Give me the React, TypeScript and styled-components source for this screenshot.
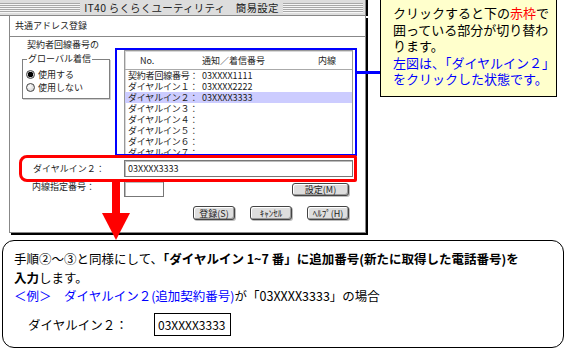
import styled, { createGlobalStyle } from 'styled-components'

const GlobalStyle = createGlobalStyle`
  body {
    margin: 0;
    background: #ffffff;
  }
`

const listRows = [
  { label: '契約者回線番号：', number: '03XXXX1111' },
  { label: 'ダイヤルイン１：', number: '03XXXX2222' },
  { label: 'ダイヤルイン２：', number: '03XXXX3333', selected: true },
  { label: 'ダイヤルイン３：', number: '' },
  { label: 'ダイヤルイン４：', number: '' },
  { label: 'ダイヤルイン５：', number: '' },
  { label: 'ダイヤルイン６：', number: '' },
  { label: 'ダイヤルイン７：', number: '' },
]

function App() {
  return (
    <Root>
      <GlobalStyle />
      <TopRow>
        <Window>
          <TitleBar>
            <Stripes />
            <TitleText>IT40 らくらくユーティリティ　簡易設定</TitleText>
            <Stripes />
          </TitleBar>
          <Body>
            <Header>共通アドレス登録</Header>
            <Main>
              <LeftGroup>
                <Caption>契約者回線番号の</Caption>
                <GroupBox>
                  <Legend>グローバル着信</Legend>
                  <RadioRow $first>
                    <Radio $checked />
                    使用する
                  </RadioRow>
                  <RadioRow>
                    <Radio />
                    使用しない
                  </RadioRow>
                </GroupBox>
              </LeftGroup>
              <List>
                <ListHead>
                  <HeadCell $pad={15}>No.</HeadCell>
                  <HeadCell>通知／着信番号</HeadCell>
                  <HeadCell>内線</HeadCell>
                </ListHead>
                {listRows.map((row) => (
                  <ListRow key={row.label} $selected={row.selected}>
                    <RowLabel>{row.label}</RowLabel>
                    <span>{row.number}</span>
                    <span />
                  </ListRow>
                ))}
              </List>
            </Main>
            <DialRow>
              <FieldLabel $width={91}>ダイヤルイン２：</FieldLabel>
              <DialInput>03XXXX3333</DialInput>
            </DialRow>
            <ExtRow>
              <FieldLabel $width={92}>内線指定番号：</FieldLabel>
              <ExtBox />
              <SetButton>設定(M)</SetButton>
            </ExtRow>
            <ButtonRow>
              <MacButton>登録(S)</MacButton>
              <MacButton>ｷｬﾝｾﾙ</MacButton>
              <MacButton>ﾍﾙﾌﾟ(H)</MacButton>
            </ButtonRow>
          </Body>
        </Window>
        <Callout>
          クリックすると下の<Red>赤枠</Red>で<br />
          囲っている部分が切り替わ<br />
          ります。<br />
          <Blue>
            左図は、「ダイヤルイン２」<br />
            をクリックした状態です。
          </Blue>
        </Callout>
      </TopRow>

      <BottomBox>
        <TextLine>
          手順②～③と同様にして、<b>「ダイヤルイン 1~7 番」に追加番号(新たに取得した電話番号)を</b>
        </TextLine>
        <TextLine>
          <b>入力</b>します。
        </TextLine>
        <TextLine>
          <Blue>＜例＞　ダイヤルイン２(追加契約番号)</Blue>が「03XXXX3333」の場合
        </TextLine>
        <ExampleRow>
          <ExampleLabel>ダイヤルイン２：</ExampleLabel>
          <ExampleBox>03XXXX3333</ExampleBox>
        </ExampleRow>
      </BottomBox>

      <BlueFrame />
      <BlueLink />
      <RedFrame />
      <Arrow width="32" height="61" viewBox="0 0 32 61">
        <rect x="12" y="0" width="8" height="34" fill="#ff0000" />
        <polygon points="2,33 30,33 16,60" fill="#ff0000" />
      </Arrow>
    </Root>
  )
}

export default App

const Root = styled.div`
  position: relative;
  width: 565px;
  height: 349px;
  overflow: hidden;
  background: #ffffff;
  font-family: "Noto Sans CJK JP", "DejaVu Sans", sans-serif;
  color: #000000;
`

const TopRow = styled.div`
  display: flex;
  align-items: flex-start;
  height: 240px;
`

const Window = styled.div`
  width: 366px;
  display: flex;
  flex-direction: column;
  flex-shrink: 0;
`

const TitleBar = styled.div`
  height: 16px;
  box-sizing: border-box;
  display: flex;
  align-items: center;
  padding-right: 2px;
  background: #dddddd;
  border-bottom: 1px solid #888888;
  border-right: 1px solid #888888;
  box-shadow: 2px 0 0 #000000;
`

const Stripes = styled.div`
  flex: 1;
  height: 10px;
  background: repeating-linear-gradient(to bottom, #a8a8a8 0 1px, #f6f6f6 1px 2px);
`

const TitleText = styled.div`
  padding: 0 4px;
  font-size: 10.5px;
  letter-spacing: 0.2px;
  line-height: 15px;
  color: #222222;
  white-space: nowrap;
`

const Body = styled.div`
  margin-left: 9px;
  height: 217px;
  box-sizing: border-box;
  border-left: 1px solid #888888;
  border-right: 1px solid #888888;
  border-bottom: 1px solid #888888;
  box-shadow: 2px 2px 0 #000000;
  background: #ffffff;
  font-size: 9px;
  color: #222222;
`

const Header = styled.div`
  height: 21px;
  box-sizing: border-box;
  padding-left: 5px;
  line-height: 20px;
  border-bottom: 1px solid #888888;
`

const Main = styled.div`
  display: flex;
  height: 119px;
  padding-left: 12px;
`

const LeftGroup = styled.div`
  width: 88px;
  display: flex;
  flex-direction: column;
`

const Caption = styled.div`
  margin: 2px 0 0 5px;
  line-height: 12px;
  white-space: nowrap;
`

const GroupBox = styled.div`
  margin-top: 8px;
  height: 40px;
  box-sizing: border-box;
  display: flex;
  flex-direction: column;
  border: 1px solid #808080;
  box-shadow: 1px 1px 0 #d0d0d0;
`

const Legend = styled.span`
  align-self: flex-start;
  margin: -7px 0 0 4px;
  padding: 0 1px;
  line-height: 12px;
  background: #ffffff;
  white-space: nowrap;
`

const RadioRow = styled.div<{ $first?: boolean }>`
  display: flex;
  align-items: center;
  gap: 3px;
  height: 13px;
  margin-top: ${(p) => (p.$first ? '3px' : '0')};
  padding-left: 3px;
  white-space: nowrap;
`

const Radio = styled.span<{ $checked?: boolean }>`
  width: 9px;
  height: 9px;
  box-sizing: border-box;
  border-radius: 50%;
  border: 1px solid #444444;
  background: ${(p) =>
    p.$checked
      ? 'radial-gradient(circle, #000000 0 2.5px, #cfcfcf 3px)'
      : 'radial-gradient(circle at 35% 35%, #ffffff, #c8c8c8)'};
`

const List = styled.div`
  margin: 13px 0 0 14px;
  width: 229px;
  height: 106px;
  box-sizing: border-box;
  border: 1px solid #999999;
  box-shadow: inset 1px 1px 0 #d8d8d8;
`

const ListHead = styled.div`
  display: grid;
  grid-template-columns: 77px 116px 1fr;
  align-items: center;
  height: 19px;
  box-sizing: border-box;
  border-bottom: 1px solid #aaaaaa;
`

const HeadCell = styled.span<{ $pad?: number }>`
  padding-left: ${(p) => p.$pad ?? 0}px;
  white-space: nowrap;
`

const ListRow = styled.div<{ $selected?: boolean }>`
  display: grid;
  grid-template-columns: 77px 116px 1fr;
  align-items: center;
  height: 11px;
  line-height: 11px;
  background: ${(p) => (p.$selected ? '#ccccff' : 'transparent')};
  white-space: nowrap;
`

const RowLabel = styled.span`
  padding-left: 3px;
  letter-spacing: -0.2px;
`

const DialRow = styled.div`
  display: flex;
  align-items: center;
  height: 25px;
  padding-left: 23px;
`

const FieldLabel = styled.span<{ $width: number }>`
  width: ${(p) => p.$width}px;
  line-height: 12px;
  white-space: nowrap;
`

const DialInput = styled.div`
  width: 229px;
  height: 17px;
  box-sizing: border-box;
  padding-left: 3px;
  line-height: 15px;
  border: 1px solid #777777;
  box-shadow: inset 1px 1px 0 #bbbbbb;
`

const ExtRow = styled.div`
  display: flex;
  align-items: flex-start;
  height: 17px;
  padding-left: 22px;
`

const ExtBox = styled.div`
  width: 40px;
  height: 16px;
  box-sizing: border-box;
  border: 1px solid #777777;
  box-shadow: inset 1px 1px 0 #bbbbbb;
`

const MacButton = styled.div`
  width: 42px;
  height: 14px;
  box-sizing: border-box;
  display: flex;
  align-items: center;
  justify-content: center;
  border: 1px solid #444444;
  border-radius: 3px;
  background: #dedede;
  box-shadow: inset 1px 1px 0 #ffffff, inset -1px -1px 0 #9a9a9a, 1px 1px 0 #bdbdbd;
  white-space: nowrap;
  font-size: 9px;
`

const SetButton = styled(MacButton)`
  width: 57px;
  height: 13px;
  margin: 2px 16px 0 auto;
`

const ButtonRow = styled.div`
  display: flex;
  justify-content: flex-end;
  gap: 15px;
  margin-top: 8px;
  padding-right: 16px;
`

const Callout = styled.div`
  margin: -1px 0 0 14px;
  width: 177px;
  height: 98px;
  box-sizing: border-box;
  padding: 5px 0 0 12px;
  border: 1px solid #000000;
  background: #ffffcc;
  font-size: 13px;
  line-height: 16.5px;
  white-space: nowrap;
`

const Red = styled.span`
  color: #ff0000;
`

const Blue = styled.span`
  color: #0000ff;
`

const BottomBox = styled.div`
  margin-left: 2px;
  width: 562px;
  height: 108px;
  box-sizing: border-box;
  padding: 9px 0 0 11px;
  border: 1px solid #000000;
  border-radius: 12px;
  font-size: 12.5px;
`

const TextLine = styled.div`
  line-height: 18.5px;
  white-space: nowrap;
`

const ExampleRow = styled.div`
  display: flex;
  align-items: center;
  margin-top: 7px;
  padding-left: 14px;
`

const ExampleLabel = styled.span`
  width: 126px;
  white-space: nowrap;
`

const ExampleBox = styled.div`
  width: 77px;
  height: 23px;
  box-sizing: border-box;
  display: flex;
  align-items: center;
  padding-left: 3px;
  border: 1px solid #000000;
  font-size: 12px;
`

const BlueFrame = styled.div`
  position: absolute;
  left: 115px;
  top: 48px;
  width: 242px;
  height: 108px;
  box-sizing: border-box;
  border: 2px solid #0000ff;
`

const BlueLink = styled.div`
  position: absolute;
  left: 357px;
  top: 71px;
  width: 23px;
  height: 3px;
  background: #0000ff;
`

const RedFrame = styled.div`
  position: absolute;
  left: 19px;
  top: 155px;
  width: 338px;
  height: 27px;
  box-sizing: border-box;
  border: 3px solid #ff0000;
  border-radius: 8px 2px 2px 8px;
`

const Arrow = styled.svg`
  position: absolute;
  left: 100px;
  top: 180px;
`
